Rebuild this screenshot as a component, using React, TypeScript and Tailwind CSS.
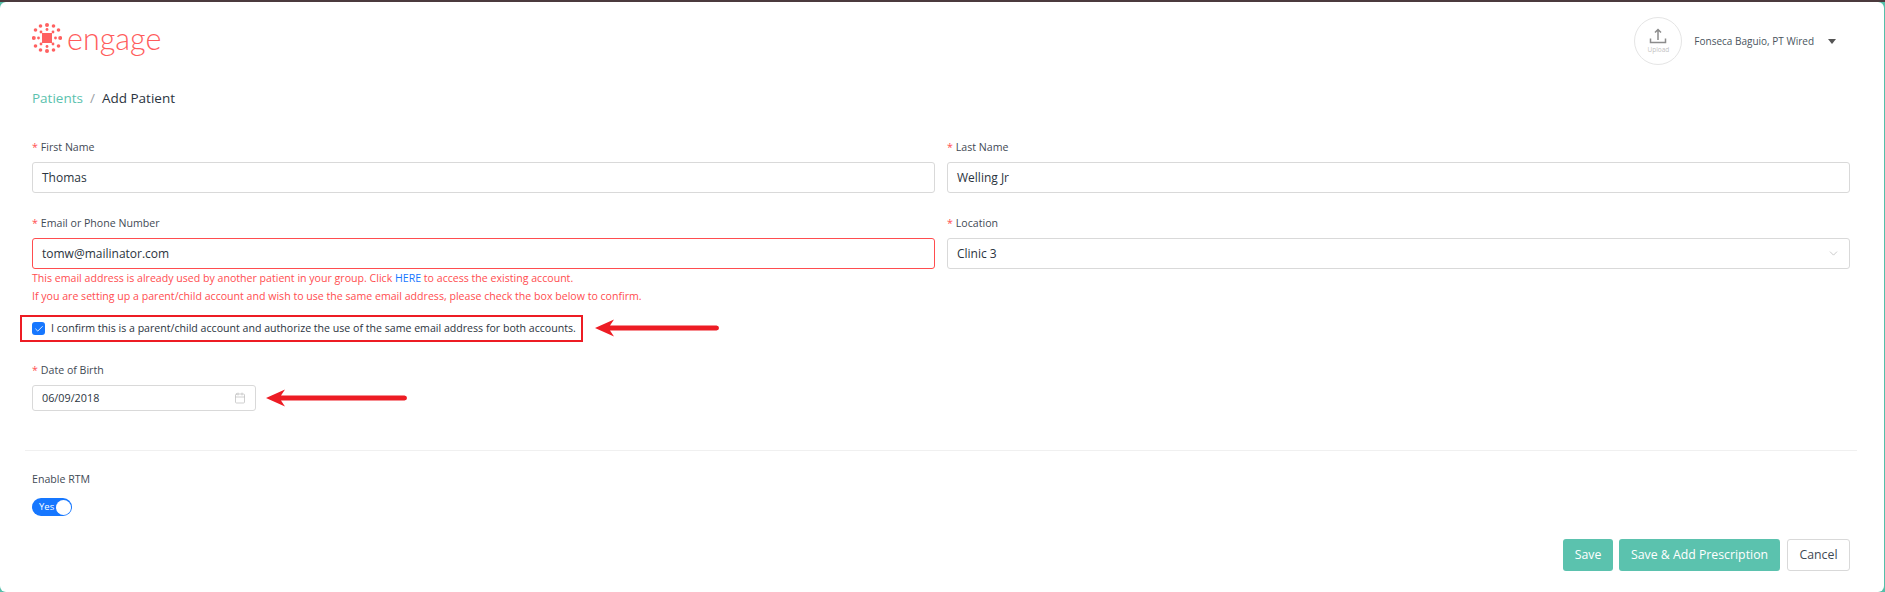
import React from 'react';
import { ChevronDown, Calendar, Check } from 'lucide-react';

const Label: React.FC<{ text: string; required?: boolean }> = ({ text, required = true }) => (
  <div className="h-[18px] text-[10.6px] leading-[18px] text-[#3f4a55]">
    {required && <span className="mr-[3px] text-[#ff4d4f]">*</span>}
    {text}
  </div>
);

const Field: React.FC<{ value: string; error?: boolean; children?: React.ReactNode }> = ({ value, error, children }) => (
  <div className={`mt-[6px] flex h-[31px] items-center justify-between rounded-[3px] border px-[9px] text-[12px] text-[#2b3440] ${error ? 'border-[#ff4d4f]' : 'border-[#d9d9d9]'}`}>
    <span>{value}</span>
    {children}
  </div>
);

const Arrow: React.FC<{ width: number; className: string }> = ({ width, className }) => (
  <svg className={className} width={width} height="18" viewBox={`0 0 ${width} 18`}>
    <path d={`M0 9 L19 0.5 L15 6.5 L${width - 2.5} 6.5 A2.5 2.5 0 0 1 ${width - 2.5} 11.5 L15 11.5 L19 17.5 Z`} fill="#ed1c24" />
  </svg>
);

const Logo = () => (
  <div className="flex items-center">
    <svg width="30" height="30" viewBox="0 0 30 30" fill="#ff6161">
      <rect x="10" y="10" width="10" height="10" />
      <circle cx="15" cy="2" r="2" />
      <circle cx="8.5" cy="3" r="1.8" />
      <circle cx="21.5" cy="3" r="1.8" />
      <circle cx="3.5" cy="7" r="1.8" />
      <circle cx="26.5" cy="7" r="1.8" />
      <circle cx="1.8" cy="15" r="2" />
      <circle cx="28.2" cy="15" r="2" />
      <circle cx="3.5" cy="23" r="1.8" />
      <circle cx="26.5" cy="23" r="1.8" />
      <circle cx="8.5" cy="27" r="1.8" />
      <circle cx="21.5" cy="27" r="1.8" />
      <circle cx="15" cy="28" r="2" />
      <circle cx="9" cy="9" r="1.4" />
      <circle cx="21" cy="9" r="1.4" />
      <circle cx="9" cy="21" r="1.4" />
      <circle cx="21" cy="21" r="1.4" />
      <circle cx="6.5" cy="15" r="1.4" />
      <circle cx="23.5" cy="15" r="1.4" />
      <circle cx="15" cy="6.5" r="1.4" />
      <circle cx="15" cy="23.5" r="1.4" />
    </svg>
    <span className="ml-[5px] font-['Lato'] text-[30.5px] font-light leading-[30px] text-[#ff5c5c]">engage</span>
  </div>
);

export default function App() {
  return (
    <div className="h-[592px] overflow-hidden bg-[#55bfa9] font-['Open_Sans',sans-serif]">
      <div className="h-[2px] bg-[#4b3a3d]" />
      <div className="relative mr-[1px] h-[590px] rounded-[6px] bg-white pl-[32px] pr-[34px]">
        <header className="flex h-[84px] items-start justify-between pt-[15px]">
          <div className="pt-[6px]">
            <Logo />
          </div>
          <div className="mr-[14px] flex items-center">
            <div className="flex h-[48px] w-[48px] flex-col items-center justify-center rounded-full border border-[#e5e5e5]">
              <svg width="18" height="16" viewBox="0 0 18 16" fill="none" stroke="#8c8c8c" strokeWidth="1.5">
                <path d="M9 12V1.5M6 4.5L9 1.5L12 4.5M1.5 10.5V14.5H16.5V10.5" />
              </svg>
              <span className="mt-[2px] text-[6.5px] leading-[8px] text-[#bfbfbf]">Upload</span>
            </div>
            <span className="ml-[12px] text-[10px] text-[#4a5560]">Fonseca Baguio, PT Wired</span>
            <span className="ml-[14px] h-0 w-0 border-x-[4px] border-t-[5px] border-x-transparent border-t-[#555]" />
          </div>
        </header>

        <nav className="flex h-[24px] items-center text-[13.5px] leading-[24px]">
          <span className="text-[#5bc2ae]">Patients</span>
          <span className="mx-[7px] text-[#9aa0a6]">/</span>
          <span className="text-[#2b3440]">Add Patient</span>
        </nav>

        <div className="mt-[28px] grid grid-cols-2 gap-x-[12px]">
          <div>
            <Label text="First Name" />
            <Field value="Thomas" />
          </div>
          <div>
            <Label text="Last Name" />
            <Field value="Welling Jr" />
          </div>
          <div className="mt-[21px]">
            <Label text="Email or Phone Number" />
            <Field value="tomw@mailinator.com" error />
          </div>
          <div className="mt-[21px]">
            <Label text="Location" />
            <Field value="Clinic 3">
              <ChevronDown className="h-[13px] w-[13px] text-[#bfbfbf]" strokeWidth={1.5} />
            </Field>
          </div>
        </div>

        <div className="text-[10.6px] leading-[18px] text-[#ff4d4f]">
          <div>
            This email address is already used by another patient in your group. Click{' '}
            <span className="text-[#1677ff]">HERE</span> to access the existing account.
          </div>
          <div>If you are setting up a parent/child account and wish to use the same email address, please check the box below to confirm.</div>
        </div>

        <div className="relative mt-[10px]">
          <div className="-ml-[12px] flex h-[27px] w-[563px] items-center border-2 border-[#ed1c24] pl-[10px]">
            <span className="flex h-[13px] w-[13px] items-center justify-center rounded-[3px] bg-[#1677ff]">
              <Check className="h-[10px] w-[10px] text-white" strokeWidth={2} />
            </span>
            <span className="ml-[6px] text-[10.6px] text-[#2b3440]">I confirm this is a parent/child account and authorize the use of the same email address for both accounts.</span>
          </div>
          <Arrow width={124} className="absolute left-[563px] top-[4px]" />
        </div>

        <div className="relative mt-[19px]">
          <Label text="Date of Birth" />
          <div className="mt-[6px] flex h-[26px] w-[224px] items-center justify-between rounded-[3px] border border-[#d9d9d9] px-[9px] text-[10.8px] text-[#2b3440]">
            <span>06/09/2018</span>
            <Calendar className="h-[12px] w-[12px] text-[#bfbfbf]" strokeWidth={1.5} />
          </div>
          <Arrow width={141} className="absolute left-[234px] top-[28px]" />
        </div>

        <div className="-mx-[7px] mt-[39px] h-px bg-[#f0f0f0]" />

        <div className="mt-[19px]">
          <Label text="Enable RTM" required={false} />
          <div className="mt-[10px] flex h-[18px] w-[40px] items-center justify-between rounded-full bg-[#1677ff] pl-[7px] pr-[1px]">
            <span className="text-[9.5px] text-white">Yes</span>
            <span className="h-[15px] w-[15px] rounded-full bg-white" />
          </div>
        </div>

        <div className="mt-[23px] flex justify-end">
          <button className="h-[32px] w-[50px] rounded-[3px] bg-[#5bc2ae] text-[12.3px] text-white">Save</button>
          <button className="ml-[6px] h-[32px] w-[161px] rounded-[3px] bg-[#5bc2ae] text-[12.3px] text-white">Save &amp; Add Prescription</button>
          <button className="ml-[7px] h-[32px] w-[63px] rounded-[3px] border border-[#d9d9d9] bg-white text-[12.3px] text-[#3f4a55]">Cancel</button>
        </div>
      </div>
    </div>
  );
}
